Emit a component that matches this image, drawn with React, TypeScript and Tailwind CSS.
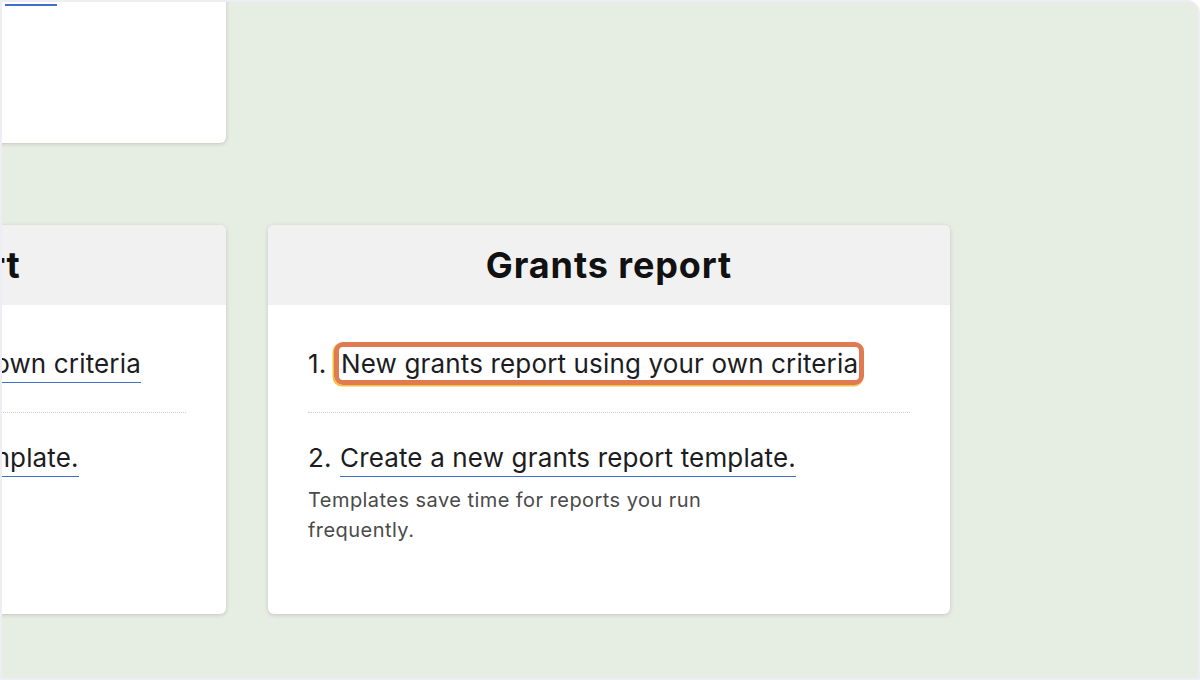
type CardProps = { title: string; item: string; highlight?: boolean };

function ReportCard({ title, item, highlight }: CardProps) {
  return (
    <div className="h-[389px] rounded-md bg-white shadow-[0_1px_4px_rgba(0,0,0,0.16)] overflow-hidden">
      <div className="h-[80px] bg-[#f1f1f1] flex items-center justify-center">
        <h2 className="text-[36px] font-bold tracking-[0.9px] text-[#111] leading-none">{title} report</h2>
      </div>
      <div className="px-[40px] pt-[41px] text-[26px] tracking-[0.15px] text-[#1c1c22]">
        <div className="flex h-[37px] items-start">
          <span className="w-[33px] leading-[36px]">1.</span>
          <span className="relative inline-block leading-[36px] border-b border-[#3f6fc9]">
            New {item} report using your own criteria
            {highlight && (
              <span className="absolute left-[-7px] right-[-6px] top-[-4px] bottom-[-3px] rounded-[9px] border-[5px] border-[#e07a50] shadow-[-1px_1px_0_0.5px_#f1c43c]" />
            )}
          </span>
        </div>
        <div className="mt-[29px] border-t border-dotted border-[#cfcfcf]" />
        <div className="mt-[27px] flex h-[37px] items-start">
          <span className="w-[32px] leading-[36px]">2.</span>
          <span className="inline-block leading-[36px] border-b border-[#3f6fc9]">
            Create a new {item} report template.
          </span>
        </div>
        <p className="mt-[8px] max-w-[420px] text-[20px] leading-[30px] tracking-[0.45px] text-[#4a4a4a]">
          Templates save time for reports you run frequently.
        </p>
      </div>
    </div>
  );
}

export default function App() {
  return (
    <div className="w-[1200px] h-[680px] bg-white" style={{ fontFamily: "Inter, 'Noto Sans', sans-serif" }}>
      <div className="w-full h-full border-2 border-[#eeedf3] rounded-tr-[13px] bg-[#e6ede3] overflow-hidden">
        <div className="ml-[-458px] mt-[-102px] grid grid-cols-[682px_682px] gap-x-[42px] gap-y-[82px]">
          <div className="h-[243px] rounded-md bg-white shadow-[0_1px_4px_rgba(0,0,0,0.16)] overflow-hidden">
            <div className="pl-[461px] pt-[68px] text-[26px] leading-[36px] text-[#1c1c22]">
              <span className="inline-block w-[52px] border-b-2 border-[#3f6fc9] text-transparent">here</span>
            </div>
          </div>
          <div />
          <ReportCard title="Pledges" item="pledge" />
          <ReportCard title="Grants" item="grants" highlight />
        </div>
      </div>
    </div>
  );
}
